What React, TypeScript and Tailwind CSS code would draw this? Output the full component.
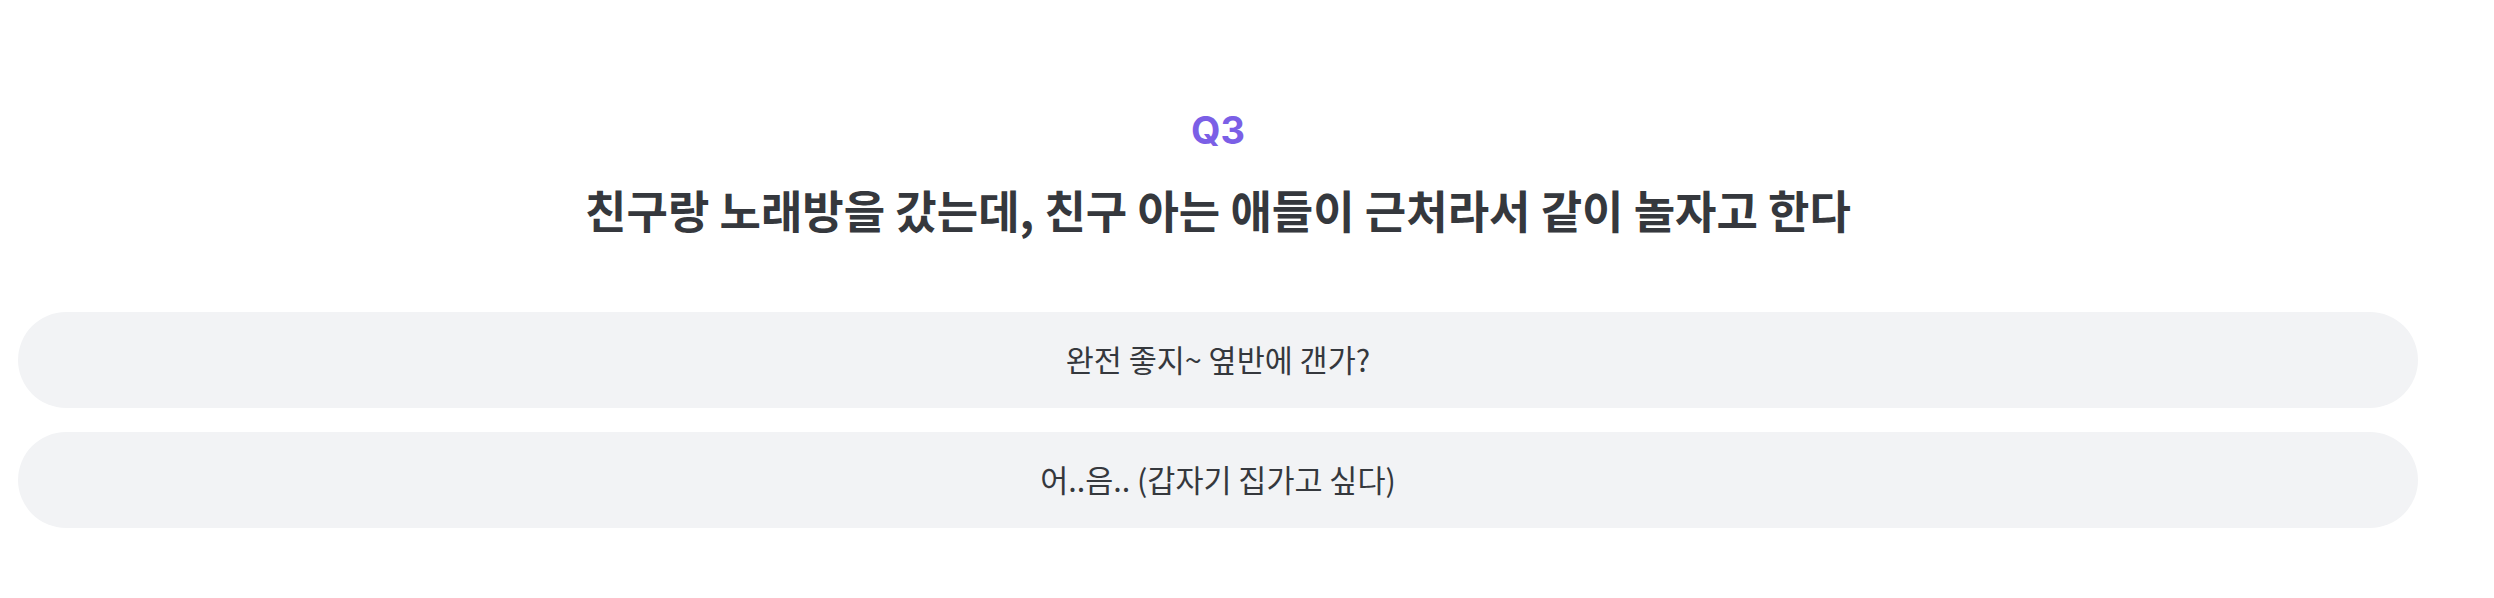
import React from "react";

const font = { fontFamily: '"Noto Sans CJK KR", "Noto Sans", sans-serif' };

export default function App() {
  const options = ["완전 좋지~ 옆반에 갠가?", "어..음.. (갑자기 집가고 싶다)"];
  return (
    <div className="w-[2494px] h-[598px] bg-white" style={font}>
      <div className="ml-[18px] w-[2400px] pt-[108px] flex flex-col items-center">
        <div
          className="text-[38px] leading-[44px] font-bold text-[#7b5fe6]"
          style={{ fontFamily: 'Inter, "Noto Sans CJK KR", sans-serif' }}
        >
          Q3
        </div>
        <h1 className="mt-[28px] text-[45px] leading-[60px] font-bold text-[#35383d]">
          친구랑 노래방을 갔는데, 친구 아는 애들이 근처라서 같이 놀자고 한다
        </h1>
        <div className="mt-[72px] w-full flex flex-col gap-[24px]">
          {options.map((o) => (
            <button
              key={o}
              className="w-full h-[96px] rounded-full bg-[#f2f3f5] text-[30.5px] text-[#35383d] flex items-center justify-center"
              style={font}
            >
              {o}
            </button>
          ))}
        </div>
      </div>
    </div>
  );
}
